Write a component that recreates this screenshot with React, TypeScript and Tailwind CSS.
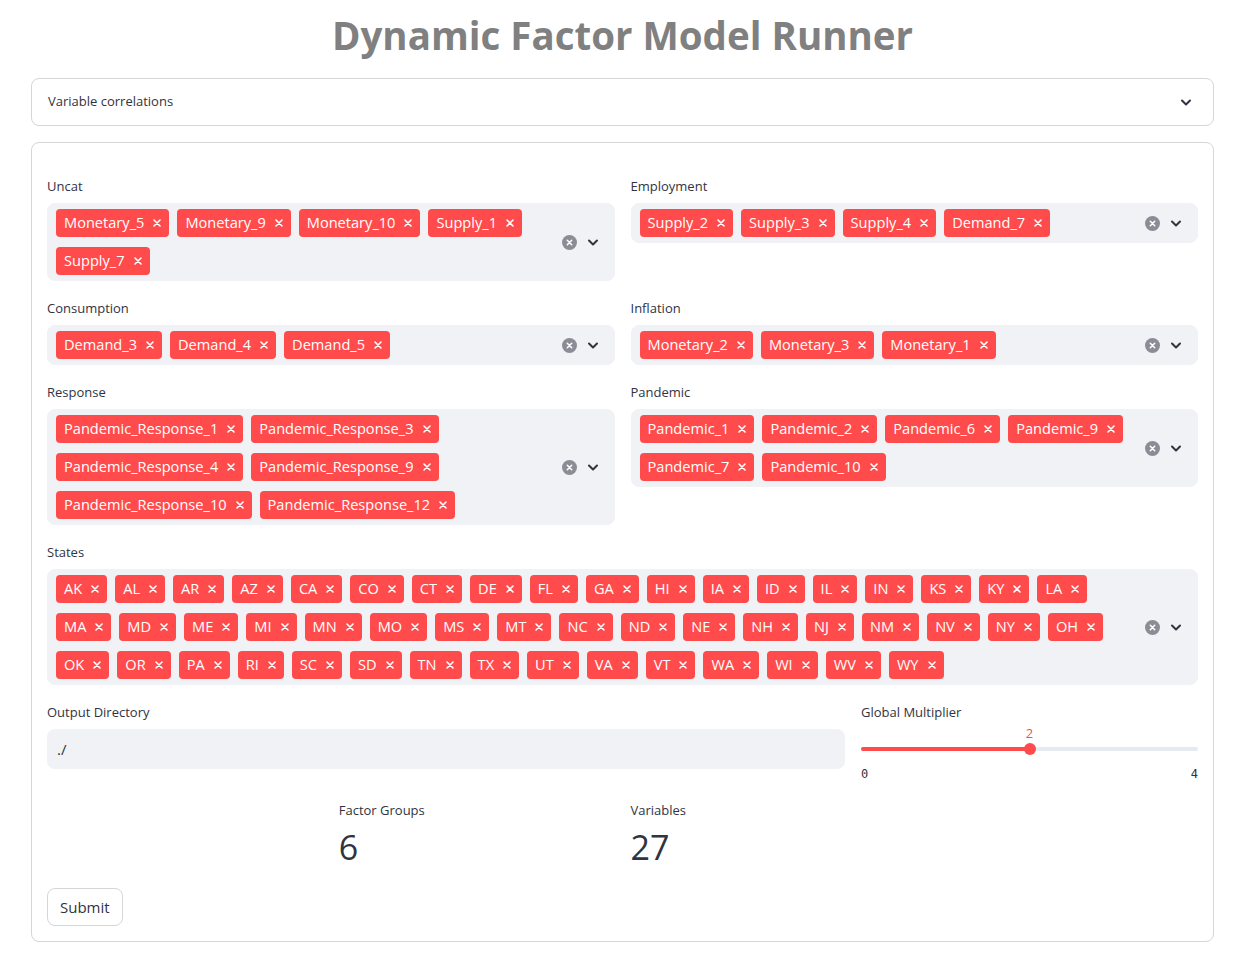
import React from "react";

const groups: { label: string; items: string[] }[][] = [
  [
    { label: "Uncat", items: ["Monetary_5", "Monetary_9", "Monetary_10", "Supply_1", "Supply_7"] },
    { label: "Employment", items: ["Supply_2", "Supply_3", "Supply_4", "Demand_7"] },
  ],
  [
    { label: "Consumption", items: ["Demand_3", "Demand_4", "Demand_5"] },
    { label: "Inflation", items: ["Monetary_2", "Monetary_3", "Monetary_1"] },
  ],
  [
    {
      label: "Response",
      items: [
        "Pandemic_Response_1",
        "Pandemic_Response_3",
        "Pandemic_Response_4",
        "Pandemic_Response_9",
        "Pandemic_Response_10",
        "Pandemic_Response_12",
      ],
    },
    {
      label: "Pandemic",
      items: ["Pandemic_1", "Pandemic_2", "Pandemic_6", "Pandemic_9", "Pandemic_7", "Pandemic_10"],
    },
  ],
];

const states =
  "AK AL AR AZ CA CO CT DE FL GA HI IA ID IL IN KS KY LA MA MD ME MI MN MO MS MT NC ND NE NH NJ NM NV NY OH OK OR PA RI SC SD TN TX UT VA VT WA WI WV WY".split(
    " "
  );

function Chevron({ className = "" }: { className?: string }) {
  return (
    <svg className={className} viewBox="0 0 14 14" fill="none" stroke="currentColor">
      <path d="M3 5.5l4 4 4-4" strokeWidth={2} strokeLinecap="round" strokeLinejoin="round" />
    </svg>
  );
}

function Tag({ text }: { text: string }) {
  return (
    <span className="flex h-[28px] items-center gap-[9px] rounded-[4px] bg-[#ff4b4b] pl-2 pr-[8px] text-[14.6px] text-white">
      {text}
      <svg className="h-2 w-2" viewBox="0 0 8 8" fill="none" stroke="currentColor">
        <path d="M1 1l6 6M7 1L1 7" strokeWidth={1.6} strokeLinecap="round" />
      </svg>
    </span>
  );
}

function Label({ children }: { children: React.ReactNode }) {
  return <div className="mb-1 flex h-6 items-center text-[13px] text-[#31333f]">{children}</div>;
}

function MultiSelect({ label, items }: { label: string; items: string[] }) {
  return (
    <div>
      <Label>{label}</Label>
      <div className="flex min-h-[40px] rounded-lg border border-[#f0f2f6] bg-[#f0f2f6]">
        <div className="flex flex-1 flex-wrap gap-x-2 gap-y-[10px] py-[5px] pl-2">
          {items.map((t) => (
            <Tag key={t} text={t} />
          ))}
        </div>
        <div className="flex items-center gap-[9px] pr-[14px] pl-2">
          <span className="flex h-[15px] w-[15px] items-center justify-center rounded-full bg-[#8b8d96]">
            <svg className="h-[7px] w-[7px]" viewBox="0 0 8 8" fill="none" stroke="white">
              <path d="M1.5 1.5l5 5M6.5 1.5l-5 5" strokeWidth={1.8} strokeLinecap="round" />
            </svg>
          </span>
          <Chevron className="h-[14px] w-[14px] text-[#31333f]" />
        </div>
      </div>
    </div>
  );
}

export default function App() {
  return (
    <div className="min-h-[959px] bg-white font-['Open_Sans',sans-serif] text-[#31333f]">
      <div className="ml-[31px] w-[1183px]">
        <h1 className="flex h-[78px] items-start justify-center pt-[9px] text-[38.5px] leading-[52px] font-bold text-[#808080]">
          Dynamic Factor Model Runner
        </h1>

        <div className="flex h-[48px] items-center justify-between rounded-lg border border-[#d6d6d9] pr-[20px] pl-4 text-[13px]">
          <span>Variable correlations</span>
          <Chevron className="h-[14px] w-[14px] text-[#31333f]" />
        </div>

        <div className="mt-4 flex flex-col gap-4 rounded-lg border border-[#d6d6d9] px-[15px] pt-[32px] pb-[15px]">
          {groups.map((row, i) => (
            <div key={i} className="grid grid-cols-2 items-start gap-4">
              {row.map((g) => (
                <MultiSelect key={g.label} label={g.label} items={g.items} />
              ))}
            </div>
          ))}

          <MultiSelect label="States" items={states} />

          <div className="grid grid-cols-[798px_1fr] items-start gap-4">
            <div>
              <Label>Output Directory</Label>
              <div className="flex h-[40px] items-center rounded-lg bg-[#f0f2f6] px-[10px] text-[15px]">./</div>
            </div>
            <div>
              <Label>Global Multiplier</Label>
              <div className="relative h-[37px]">
                <div className="absolute top-[18px] right-0 left-0 h-1 rounded-full bg-[#e6eaf1]" />
                <div className="absolute top-[18px] left-0 h-1 w-1/2 rounded-full bg-[#ff4b4b]" />
                <div className="absolute top-[14px] left-1/2 -ml-1.5 h-3 w-3 rounded-full bg-[#ff4b4b]" />
                <div className="absolute top-[-5px] left-1/2 -translate-x-1/2 text-[13px] text-[#ff4b4b]">2</div>
              </div>
              <div className="flex justify-between font-['DejaVu_Sans_Mono',monospace] text-[12px] leading-[16px]">
                <span>0</span>
                <span>4</span>
              </div>
            </div>
          </div>

          <div className="grid grid-cols-4 gap-4">
            <div />
            <div>
              <div className="flex h-[26px] items-center text-[13px]">Factor Groups</div>
              <div className="text-[34px] leading-[47px]">6</div>
            </div>
            <div>
              <div className="flex h-[26px] items-center text-[13px]">Variables</div>
              <div className="text-[34px] leading-[47px]">27</div>
            </div>
            <div />
          </div>

          <div className="pt-px">
            <button className="h-[38px] rounded-lg border border-[#d6d6d9] bg-white px-3 text-[15px]">Submit</button>
          </div>
        </div>
      </div>
    </div>
  );
}
